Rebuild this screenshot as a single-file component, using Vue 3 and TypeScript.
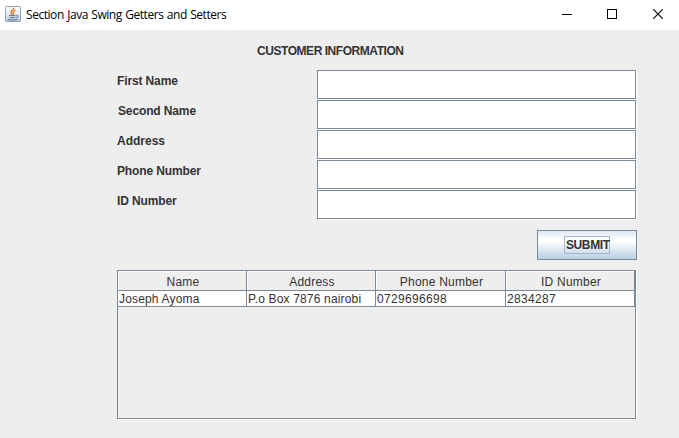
<script setup lang="ts">
import { ref } from 'vue'

interface Field {
  id: string
  label: string
}

const fields: Field[] = [
  { id: 'first', label: 'First Name' },
  { id: 'second', label: 'Second Name' },
  { id: 'address', label: 'Address' },
  { id: 'phone', label: 'Phone Number' },
  { id: 'idno', label: 'ID Number' },
]

const values = ref<Record<string, string>>({ first: '', second: '', address: '', phone: '', idno: '' })
const columns: string[] = ['Name', 'Address', 'Phone Number', 'ID Number']
const rows = ref<string[][]>([['Joseph Ayoma', 'P.o Box 7876 nairobi', '0729696698', '2834287']])

function submit(): void {
  const v = values.value
  rows.value.push([`${v.first} ${v.second}`, v.address, v.phone, v.idno])
}
</script>

<template>
  <div class="window">
    <header class="titlebar">
      <svg class="java" width="16" height="16" viewBox="0 0 16 16">
        <defs>
          <linearGradient id="tile" x1="0" y1="0" x2="0" y2="1">
            <stop offset="0" stop-color="#fbfcfd" />
            <stop offset="0.5" stop-color="#e6ebf0" />
            <stop offset="1" stop-color="#b3c6d5" />
          </linearGradient>
        </defs>
        <rect x="0.5" y="0.5" width="15" height="15" rx="0.8" fill="url(#tile)" stroke="#8fa1b0" />
        <path d="M8.9 1.8C9.8 4 5.2 4.6 6 6.6C6.3 7.4 7.3 7.8 7.2 8.8" fill="none" stroke="#e8792a" stroke-width="1.6" />
        <path d="M10.6 4.2C8.4 5.2 8 6 8.6 6.9C9 7.6 8.8 8 8.2 8.7" fill="none" stroke="#ea8236" stroke-width="1.2" />
        <path d="M3.9 9.4H10.6M4.8 11.4H10.2M3 13.4C5.4 14.2 9.8 14.2 12.4 13.2" fill="none" stroke="#56799a" stroke-width="1" />
        <path d="M11 9.3C13.8 8.8 13.4 11.3 11 11.7" fill="none" stroke="#56799a" stroke-width="1" />
      </svg>
      <span class="title">Section Java Swing Getters and Setters</span>
      <svg class="controls" width="102" height="12" viewBox="0 0 102 12" fill="none" stroke="#000">
        <path d="M0 5.5H10" shape-rendering="crispEdges" />
        <rect x="45.5" y="0.5" width="9" height="9" shape-rendering="crispEdges" />
        <path d="M91.2 0.2L100.8 9.8M100.8 0.2L91.2 9.8" stroke-width="1.15" />
      </svg>
    </header>

    <main class="panel">
      <h1 class="heading">CUSTOMER INFORMATION</h1>
      <form class="form" @submit.prevent="submit">
        <div v-for="f in fields" :key="f.id" class="row">
          <label :for="f.id" :class="['label', f.id]">{{ f.label }}</label>
          <input :id="f.id" v-model="values[f.id]" class="input" type="text" />
        </div>
        <button class="submit" type="submit"><span class="focus">SUBMIT</span></button>
      </form>

      <section class="scroll">
        <div class="grid head">
          <div v-for="(c, i) in columns" :key="c" :class="['th', 'h' + i]">{{ c }}</div>
        </div>
        <div v-for="(r, i) in rows" :key="i" class="grid body">
          <div v-for="(c, j) in r" :key="j" :class="['td', 'c' + j]">{{ c }}</div>
        </div>
      </section>
    </main>
  </div>
</template>

<style>
body {
  margin: 0;
  overflow: hidden;
}
</style>

<style scoped>
.window {
  width: 679px;
  height: 438px;
  background: #eee;
  color: #333;
  font-family: "Liberation Sans", Arial, sans-serif;
  font-size: 12px;
  line-height: 14px;
  overflow: hidden;
}
.window * {
  box-sizing: border-box;
}
.titlebar {
  display: flex;
  height: 30px;
  padding-left: 5px;
  background: #fff;
}
.java {
  margin-top: 6px;
}
.title {
  margin: 7px 0 0 5px;
  color: #000;
  font: 12px/16px "Open Sans", "Noto Sans", sans-serif;
  letter-spacing: -0.45px;
  word-spacing: 0.7px;
  white-space: nowrap;
}
.controls {
  margin: 9px 15px 0 auto;
}
.panel {
  padding: 14px 42px 0 117px;
}
.heading {
  margin: 0 0 12px 140px;
  font-size: 12px;
  line-height: 14px;
  letter-spacing: -0.45px;
  white-space: nowrap;
}
.form {
  display: flex;
  flex-direction: column;
}
.row {
  display: flex;
  height: 30px;
}
.label {
  width: 200px;
  padding-top: 4px;
  font-weight: bold;
  letter-spacing: -0.13px;
}
.label.second {
  padding-left: 1px;
}
.label.address {
  letter-spacing: 0;
}
.input {
  width: 319px;
  height: 29px;
  padding: 0 2px;
  border: 1px solid #7a8a99;
  border-radius: 0;
  background: #fff;
  box-shadow: 1px 1px 0 #fff;
  outline: none;
  font: inherit;
}
.submit {
  display: flex;
  align-items: center;
  justify-content: center;
  align-self: flex-end;
  width: 100px;
  height: 30px;
  margin-top: 10px;
  padding: 0;
  border: 1px solid #7a8a99;
  border-radius: 0;
  background: linear-gradient(#dde8f3 0%, #fff 30%, #fff 36%, #b8cfe5 100%);
  color: #333;
  font: bold 12px/17px "Liberation Sans", Arial, sans-serif;
  letter-spacing: -0.4px;
}
.focus {
  width: 46px;
  height: 18px;
  padding-left: 1px;
  border: 1px solid #a3b8cc;
  text-align: left;
  white-space: nowrap;
}
.scroll {
  width: 519px;
  height: 149px;
  margin-top: 10px;
  border: 1px solid #7a8a99;
  box-shadow: 1px 1px 0 #fff;
}
.grid {
  display: grid;
  grid-template-columns: 129px 129px 130px 129px;
  white-space: nowrap;
}
.th {
  height: 20px;
  padding: 4px 0 0 2px;
  border-right: 1px solid #7a8a99;
  border-bottom: 1px solid #7a8a99;
  box-shadow: inset 1px 1px 0 #fff;
  text-align: center;
  letter-spacing: 0.22px;
}
.td {
  height: 16px;
  padding-left: 1px;
  border-right: 1px solid #7a8a99;
  border-bottom: 1px solid #7a8a99;
  background: #fff;
  line-height: 17px;
  letter-spacing: 0.17px;
}
.c2,
.c3 {
  letter-spacing: 0.33px;
}
</style>
